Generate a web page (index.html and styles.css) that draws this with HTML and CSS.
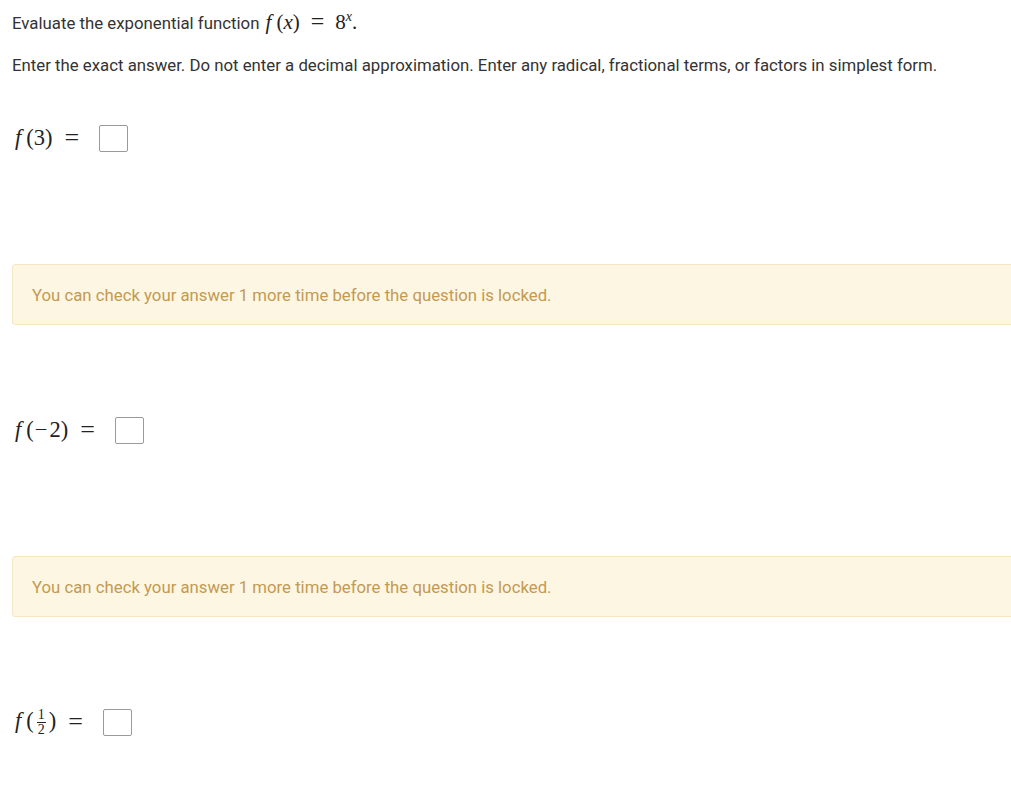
FILE: index.html
```html
<!DOCTYPE html>
<html>
<head>
<meta charset="utf-8">
<link rel="stylesheet" href="styles.css">
</head>
<body>
<div class="page">
  <p class="intro">Evaluate the exponential function <span class="math"><i class="fn">f</i>(<i>x</i>)<span class="eq">=</span>8<sup><i>x</i></sup>.</span></p>
  <p class="instr">Enter the exact answer. Do not enter a decimal approximation. Enter any radical, fractional terms, or factors in simplest form.</p>

  <div class="row first"><span class="math"><i class="fn">f</i>(3)</span><span class="math eq">=</span><span class="box"></span></div>
  <div class="notice">You can check your answer 1 more time before the question is locked.</div>

  <div class="row"><span class="math"><i class="fn">f</i>(<span class="minus">−</span>2)</span><span class="math eq">=</span><span class="box"></span></div>
  <div class="notice">You can check your answer 1 more time before the question is locked.</div>

  <div class="row last"><span class="math"><i class="fn">f</i>(<span class="frac"><span class="num">1</span><span class="den">2</span></span>)</span><span class="math eq">=</span><span class="box"></span></div>
</div>
</body>
</html>
```

FILE: styles.css
```css
html, body {
  margin: 0;
  padding: 0;
  background: #ffffff;
}
body {
  font-family: Roboto, "Liberation Sans", sans-serif;
  font-size: 16.8px;
  color: #333333;
  overflow: hidden;
}
.page {
  padding: 10px 0 0 12px;
  width: 1010px;
}
p {
  margin: 0;
}
.intro {
  line-height: 24px;
}
.instr {
  margin-top: 18px;
  line-height: 24px;
}
.math {
  font-family: "Liberation Serif", "DejaVu Serif", serif;
  font-size: 21px;
  color: #222;
}
.math i {
  font-style: italic;
}
.math .fn {
  margin-right: 5px;
}
.math sup {
  font-size: 14px;
  vertical-align: 8px;
  line-height: 0;
}
.intro .math {
  margin-left: 2px;
}
.intro .eq {
  margin: 0 11px;
  font-size: 24px;
  line-height: 0;
}
.row {
  display: flex;
  align-items: center;
  height: 28px;
  margin-top: 47px;
  margin-bottom: 112px;
  padding-left: 3px;
}
.row.last {
  margin-bottom: 0;
}
.row .math {
  font-size: 22.5px;
}
.row .eq {
  font-size: 26px;
  margin: 0 20px 0 12px;
}
.minus {
  margin: 0 2px 0 1px;
}
.box {
  display: inline-block;
  width: 27px;
  height: 25px;
  border: 1px solid #9a9a9a;
  border-radius: 2px;
  background: #fff;
}
.frac {
  display: inline-flex;
  flex-direction: column;
  align-items: center;
  vertical-align: middle;
  font-size: 14px;
  line-height: 12px;
  margin: 0 3px;
}
.frac .num {
  border-bottom: 1px solid #222;
  padding: 0 1px 1px;
}
.frac .den {
  padding-top: 1px;
}
.notice {
  height: 59px;
  background: #fdf6e3;
  border: 1px solid #f6e6c3;
  border-radius: 3px;
  color: #c39a52;
  font-size: 16.75px;
  padding-left: 19px;
  display: flex;
  align-items: center;
  margin-bottom: 91px;
}
```
